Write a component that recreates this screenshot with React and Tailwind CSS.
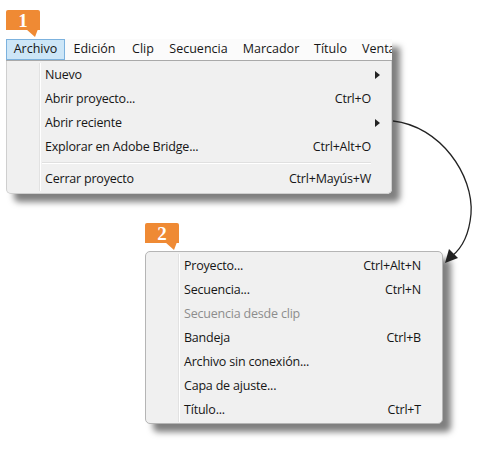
import React from "react";

const font = { fontFamily: '"Open Sans", "Noto Sans", sans-serif' };

function Row({ label, shortcut, arrow, disabled }) {
  return (
    <div className="flex h-[24px] items-center">
      <div className="w-[33px] shrink-0 self-stretch border-r border-r-[#e2e2e2]" />
      <div className="w-px self-stretch bg-white" />
      <div className={"flex flex-1 items-center pl-[4px] " + (disabled ? "text-[#8d8d8d]" : "text-[#161616]")}>
        <span className="flex-1">{label}</span>
        {shortcut && <span>{shortcut}</span>}
        {arrow && (
          <svg width="5" height="8" viewBox="0 0 5 8" className="mr-[-9px]">
            <path d="M0 0 L5 4 L0 8 Z" fill="#222" />
          </svg>
        )}
      </div>
    </div>
  );
}

function Separator() {
  return (
    <div className="flex h-[8px]">
      <div className="w-[33px] shrink-0 border-r border-r-[#e2e2e2]" />
      <div className="w-px bg-white" />
      <div className="flex flex-1 flex-col justify-center pl-[1px]">
        <div className="h-px bg-[#e0e0e0]" />
        <div className="h-px bg-white" />
      </div>
    </div>
  );
}

export default function App() {
  return (
    <div className="relative h-[459px] w-[477px] overflow-hidden bg-white text-[12.5px] leading-none tracking-[-0.2px]" style={font}>
      <div className="pl-[6px] pt-[39px]">
        <div className="w-[386px] rounded-b-[5px] shadow-[8px_8px_6px_rgba(0,0,0,0.5)]">
          <div className="flex h-[22px] items-stretch overflow-hidden whitespace-nowrap border-b border-b-[#a9a9a9] bg-[#fbfbfb] tracking-[0px] text-[#161616]">
            <div className="flex w-[59px] shrink-0 items-center justify-center border border-[#7cb2de] bg-[#cde6f7]">Archivo</div>
            <div className="flex w-[59px] shrink-0 items-center justify-center">Edición</div>
            <div className="flex w-[38px] shrink-0 items-center justify-center">Clip</div>
            <div className="flex w-[73px] shrink-0 items-center justify-center">Secuencia</div>
            <div className="flex w-[72px] shrink-0 items-center justify-center">Marcador</div>
            <div className="flex w-[47px] shrink-0 items-center justify-center">Título</div>
            <div className="flex shrink-0 items-center pl-[8px]">Ventana</div>
          </div>
          <div className="rounded-b-[5px] border-x border-b border-[#cfcfcf] bg-[#f0f0f0] pb-[2px] pr-[20px] pt-[2px]">
            <Row label="Nuevo" arrow />
            <Row label="Abrir proyecto..." shortcut="Ctrl+O" />
            <Row label="Abrir reciente" arrow />
            <Row label="Explorar en Adobe Bridge..." shortcut="Ctrl+Alt+O" />
            <Separator />
            <Row label="Cerrar proyecto" shortcut="Ctrl+Mayús+W" />
          </div>
        </div>
      </div>

      <div className="pl-[145px] pt-[57px]">
        <div className="w-[298px] rounded-[5px] border border-[#b5b5b5] bg-[#f0f0f0] pb-[1px] pr-[21px] pt-[2px] shadow-[8px_8px_6px_rgba(0,0,0,0.5)]">
          <Row label="Proyecto..." shortcut="Ctrl+Alt+N" />
          <Row label="Secuencia..." shortcut="Ctrl+N" />
          <Row label="Secuencia desde clip" disabled />
          <Row label="Bandeja" shortcut="Ctrl+B" />
          <Row label="Archivo sin conexión..." />
          <Row label="Capa de ajuste..." />
          <Row label="Título..." shortcut="Ctrl+T" />
        </div>
      </div>

      {/* Badge 1 */}
      <div className="absolute left-[6px] top-[10px] h-[20px] w-[34px]">
        <div
          className="flex h-[20px] w-[34px] items-center justify-center rounded-t-[2px] bg-[#ef8a34] text-[19px] font-bold text-white"
          style={{ fontFamily: '"Liberation Serif", serif' }}
        >
          1
        </div>
        <svg className="absolute left-[20px] top-[19px]" width="12" height="9" viewBox="0 0 12 9">
          <path d="M0 0 L12 0 L9 8 Z" fill="#ef8a34" />
        </svg>
      </div>

      {/* Badge 2 */}
      <div className="absolute left-[145px] top-[223px] h-[20px] w-[34px]">
        <div
          className="flex h-[20px] w-[34px] items-center justify-center rounded-t-[2px] bg-[#ef8a34] text-[19px] font-bold text-white"
          style={{ fontFamily: '"Liberation Serif", serif' }}
        >
          2
        </div>
        <svg className="absolute left-[20px] top-[19px]" width="12" height="9" viewBox="0 0 12 9">
          <path d="M0 0 L12 0 L9 8 Z" fill="#ef8a34" />
        </svg>
      </div>

      {/* Curved arrow */}
      <svg className="absolute left-0 top-0" width="477" height="459" viewBox="0 0 477 459">
        <path
          d="M393 121 C 440 126, 474 175, 471 214 C 469 236, 462 248, 452 256"
          fill="none"
          stroke="#222"
          strokeWidth="1.3"
        />
        <path d="M445 263 L449 249 L458 258 Z" fill="#222" />
      </svg>
    </div>
  );
}
